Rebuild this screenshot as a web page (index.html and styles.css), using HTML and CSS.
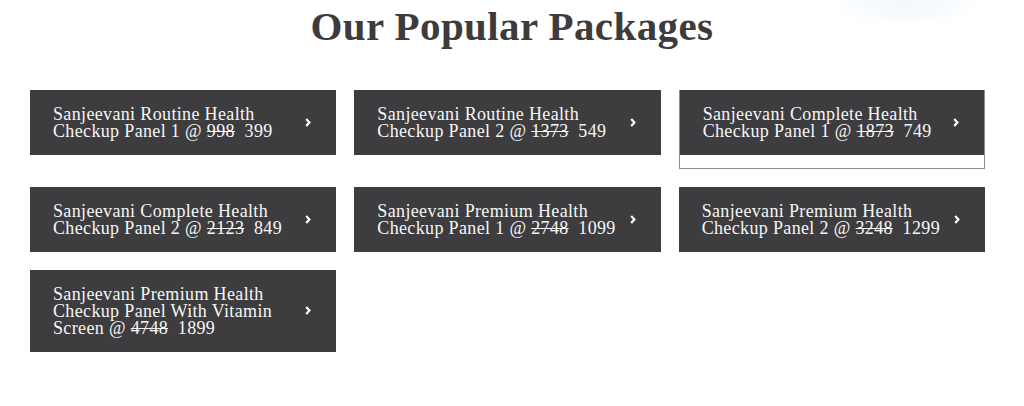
FILE: index.html
```html
<!DOCTYPE html>
<html>
<head>
<meta charset="utf-8">
<link rel="stylesheet" href="styles.css">
</head>
<body>
<section class="packages">
  <h2 class="title">Our Popular Packages</h2>
  <div class="grid">
    <a class="card"><span class="label">Sanjeevani Routine Health Checkup Panel 1 @ <s>998</s>&nbsp; 399</span><svg class="chev" viewBox="0 0 6 9" width="6" height="9"><path d="M1.2 1 L4.4 4.5 L1.2 8" fill="none" stroke="#fff" stroke-width="2.2"/></svg></a>
    <a class="card"><span class="label">Sanjeevani Routine Health Checkup Panel 2 @ <s>1373</s>&nbsp; 549</span><svg class="chev" viewBox="0 0 6 9" width="6" height="9"><path d="M1.2 1 L4.4 4.5 L1.2 8" fill="none" stroke="#fff" stroke-width="2.2"/></svg></a>
    <div class="open">
      <a class="card"><span class="label">Sanjeevani Complete Health Checkup Panel 1 @ <s>1873</s>&nbsp; 749</span><svg class="chev" viewBox="0 0 6 9" width="6" height="9"><path d="M1.2 1 L4.4 4.5 L1.2 8" fill="none" stroke="#fff" stroke-width="2.2"/></svg></a>
      <div class="drop"></div>
    </div>
    <a class="card"><span class="label">Sanjeevani Complete Health Checkup Panel 2 @ <s>2123</s>&nbsp; 849</span><svg class="chev" viewBox="0 0 6 9" width="6" height="9"><path d="M1.2 1 L4.4 4.5 L1.2 8" fill="none" stroke="#fff" stroke-width="2.2"/></svg></a>
    <a class="card"><span class="label">Sanjeevani Premium Health Checkup Panel 1 @ <s>2748</s>&nbsp; 1099</span><svg class="chev" viewBox="0 0 6 9" width="6" height="9"><path d="M1.2 1 L4.4 4.5 L1.2 8" fill="none" stroke="#fff" stroke-width="2.2"/></svg></a>
    <a class="card"><span class="label">Sanjeevani Premium Health Checkup Panel 2 @ <s>3248</s>&nbsp; 1299</span><svg class="chev" viewBox="0 0 6 9" width="6" height="9"><path d="M1.2 1 L4.4 4.5 L1.2 8" fill="none" stroke="#fff" stroke-width="2.2"/></svg></a>
    <a class="card"><span class="label">Sanjeevani Premium Health Checkup Panel With Vitamin Screen @ <s>4748</s>&nbsp; 1899</span><svg class="chev" viewBox="0 0 6 9" width="6" height="9"><path d="M1.2 1 L4.4 4.5 L1.2 8" fill="none" stroke="#fff" stroke-width="2.2"/></svg></a>
  </div>
</section>
</body>
</html>
```
FILE: styles.css
```css
html, body {
  margin: 0;
  padding: 0;
}
body {
  width: 1024px;
  height: 406px;
  overflow: hidden;
  background:
    radial-gradient(ellipse 75px 28px at 905px 0px, #f2f8fd 0%, #f7fbfe 55%, rgba(255,255,255,0) 100%),
    #fff;
  font-family: "Liberation Serif", "DejaVu Serif", serif;
}
.title {
  margin: 0;
  padding-top: 2px;
  height: 88px;
  text-align: center;
  font-size: 41px;
  font-weight: bold;
  line-height: 48px;
  color: #3d3b3c;
  letter-spacing: 0.4px;
  padding-left: 0;
}
.grid {
  width: 955px;
  margin-left: 30px;
  display: grid;
  grid-template-columns: repeat(3, 1fr);
  column-gap: 18px;
  row-gap: 18px;
  align-items: start;
}
.card {
  display: flex;
  align-items: center;
  gap: 4px;
  background: #3d3c3e;
  color: #f6f6f6;
  padding: 16px 25px 15px 23px;
  font-size: 18px;
  letter-spacing: 0.35px;
  line-height: 17px;
  box-sizing: border-box;
}
.label {
  flex: 1;
  max-width: 252px;
}
.label s {
  text-decoration-thickness: 1px;
}
.chev {
  flex: none;
  margin-left: auto;
  margin-top: -2px;
}
.open {
  border: 1px solid #8d8d8d;
  border-top: none;
}
.drop {
  height: 13px;
  background: #fff;
}
```
